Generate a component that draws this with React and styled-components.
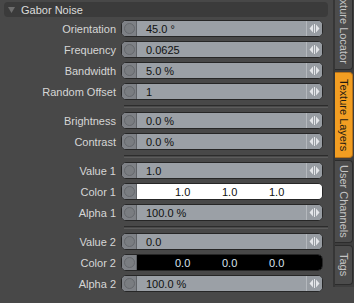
import styled, { createGlobalStyle } from "styled-components";

const GlobalStyle = createGlobalStyle`
   html, body {
      margin: 0;
      padding: 0;
      background: #484848;
   }
   body {
      font-family: "Liberation Sans", Arial, sans-serif;
      font-size: 11px;
   }
`

const Frame = styled.div`
   display: flex;
   width: 354px;
   height: 303px;
   overflow: hidden;
   background: #484848;
`

const Panel = styled.div`
   width: 333px;
   box-sizing: border-box;
   padding: 2px 5px 0 4px;
   display: flex;
   flex-direction: column;
   gap: 4px;
`

const Header = styled.div`
   height: 15px;
   margin-bottom: -1px;
   background: #3b3b3b;
   border-radius: 4px;
   display: flex;
   align-items: center;
   gap: 6px;
   padding-left: 4px;
   color: #dcdcdc;
`

const Row = styled.div`
   display: grid;
   grid-template-columns: 117px 202px;
   align-items: center;
   height: 17px;
`

const Label = styled.span`
   text-align: right;
   color: #d6d6d6;
   padding-right: 5px;
`

const Field = styled.div`
   display: flex;
   height: 17px;
   box-sizing: border-box;
   border: 1px solid #262626;
   border-radius: 5px;
   overflow: hidden;
   background: #9ba0a6;
`

const Knob = styled.div`
   width: 14px;
   flex: none;
   display: flex;
   align-items: center;
   justify-content: center;
   background: #7e8186;
   border-right: 1px solid #5f6266;
   &::after {
      content: "";
      width: 9px;
      height: 9px;
      border-radius: 50%;
      border: 1px solid #66696d;
      background: #7a7d81;
   }
`

const Value = styled.div`
   flex: 1;
   display: flex;
   align-items: center;
   padding-left: ${(p) => (p.$swatch ? "38px" : "9px")};
   background: ${(p) => p.$swatch || "transparent"};
   color: ${(p) => (p.$swatch === "#000" ? "#d9e3ee" : "#101010")};
`

const Channel = styled.span`
   width: 47px;
`

const Arrows = styled.div`
   width: 15px;
   flex: none;
   display: flex;
   align-items: center;
   justify-content: center;
   border-left: 1px solid #b4b8bd;
   background: #979ca2;
`

const Separator = styled.div`
   margin: 1px 0 0 120px;
   width: 204px;
   height: 3px;
   box-sizing: border-box;
   border-top: 1px solid #2c2c2c;
   border-bottom: 1px solid #5c5c5c;
`

const TabStrip = styled.div`
   width: 21px;
   box-sizing: border-box;
   border-left: 2px solid #363636;
   background: #3e3e3e;
   display: flex;
   flex-direction: column;
   gap: 2px;
   margin-top: -19px;
`

const Tab = styled.div`
   width: 18px;
   height: ${(p) => p.$h}px;
   flex: none;
   box-sizing: border-box;
   border: 1px solid ${(p) => (p.$active ? "#b8731a" : "#2c2c2c")};
   border-left: none;
   border-radius: 0 4px 4px 0;
   background: ${(p) => (p.$active ? "#f29e22" : "#4c4c4c")};
   color: ${(p) => (p.$active ? "#1e1a14" : "#c4c4c4")};
   writing-mode: vertical-rl;
   display: flex;
   align-items: center;
   justify-content: center;
   line-height: 17px;
`

const Filler = styled.div`
   flex: 1;
   margin-left: -2px;
   background: #484848;
`

function ArrowGlyph() {
   return (
      <svg width="11" height="9" viewBox="0 0 11 9">
         <path d="M4 0.5 L0.5 4.5 L4 8.5 Z" fill="#e4e6e9" />
         <rect x="5" y="0" width="1" height="9" fill="#e4e6e9" />
         <path d="M7 0.5 L10.5 4.5 L7 8.5 Z" fill="#e4e6e9" />
      </svg>
   );
}

function NumberRow({ label, value }) {
   return (
      <Row>
         <Label>{label}</Label>
         <Field>
            <Knob />
            <Value>{value}</Value>
            <Arrows><ArrowGlyph /></Arrows>
         </Field>
      </Row>
   );
}

function ColorRow({ label, color, values }) {
   return (
      <Row>
         <Label>{label}</Label>
         <Field>
            <Knob />
            <Value $swatch={color}>
               {values.map((v, i) => <Channel key={i}>{v}</Channel>)}
            </Value>
         </Field>
      </Row>
   );
}

export default function App() {
   return (
      <Frame>
         <GlobalStyle />
         <Panel>
            <Header>
               <svg width="7" height="6" viewBox="0 0 7 6">
                  <path d="M0 0 L7 0 L3.5 6 Z" fill="#6e6e6e" />
               </svg>
               Gabor Noise
            </Header>
            <NumberRow label="Orientation" value="45.0 °" />
            <NumberRow label="Frequency" value="0.0625" />
            <NumberRow label="Bandwidth" value="5.0 %" />
            <NumberRow label="Random Offset" value="1" />
            <Separator />
            <NumberRow label="Brightness" value="0.0 %" />
            <NumberRow label="Contrast" value="0.0 %" />
            <Separator />
            <NumberRow label="Value 1" value="1.0" />
            <ColorRow label="Color 1" color="#fff" values={["1.0", "1.0", "1.0"]} />
            <NumberRow label="Alpha 1" value="100.0 %" />
            <Separator />
            <NumberRow label="Value 2" value="0.0" />
            <ColorRow label="Color 2" color="#000" values={["0.0", "0.0", "0.0"]} />
            <NumberRow label="Alpha 2" value="100.0 %" />
         </Panel>
         <TabStrip>
            <Tab $h={89}>Texture Locator</Tab>
            <Tab $h={86} $active>Texture Layers</Tab>
            <Tab $h={83}>User Channels</Tab>
            <Tab $h={40}>Tags</Tab>
            <Filler />
         </TabStrip>
      </Frame>
   );
}
